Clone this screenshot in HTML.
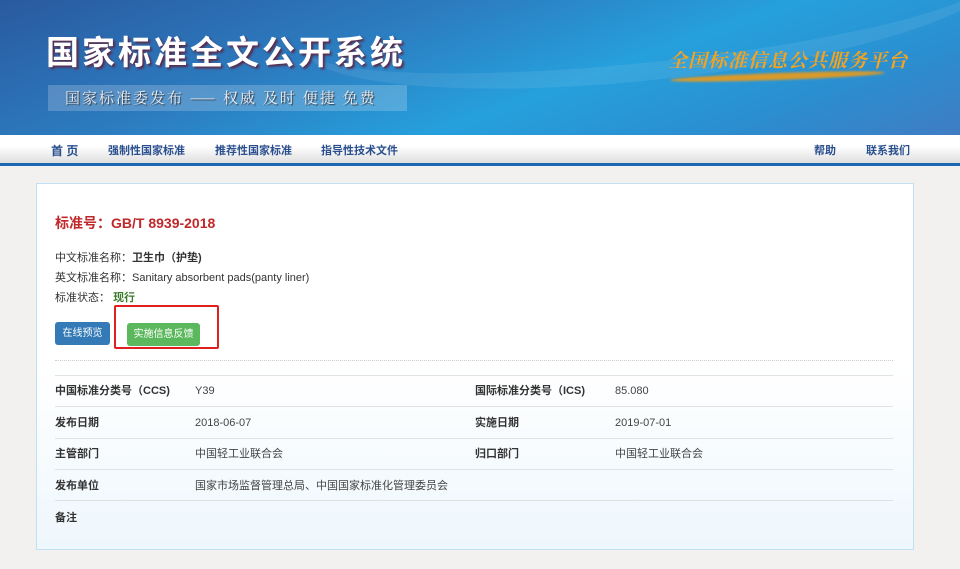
<!DOCTYPE html>
<html><head><meta charset="utf-8"><style>
*{margin:0;padding:0;box-sizing:border-box}
body{width:960px;height:569px;overflow:hidden;background:#f2f1ef;font-family:"Liberation Sans","Noto Sans CJK SC",sans-serif;position:relative}
.hdr{position:absolute;left:0;top:0;width:960px;height:135px;background:linear-gradient(160deg,#2a5a9f 0%,#2c7cc0 35%,#26a0dc 60%,#2a8fd0 80%,#3f7cc4 100%);overflow:hidden}
.swoosh{position:absolute;left:300px;top:-60px;width:700px;height:140px;border-radius:50%;border-bottom:18px solid rgba(255,255,255,.08);transform:rotate(-6deg)}
.t1{position:absolute;left:46px;top:30px;font-size:33px;font-weight:bold;color:#fff;letter-spacing:3px;text-shadow:2px 2px 2px #5a2a4a;font-family:"Noto Sans CJK SC",sans-serif;line-height:40px}
.t2{position:absolute;left:48px;top:85px;width:359px;height:26px;background:rgba(255,255,255,.2);color:#e8eef8;font-size:15px;line-height:26px;padding-left:17px;letter-spacing:2px;font-family:"Noto Serif CJK SC",serif;text-shadow:1px 1px 1px #333}
.t3{position:absolute;left:668px;top:46px;color:#f3a322;font-size:19px;letter-spacing:1px;font-style:italic;font-family:"Noto Serif CJK SC",serif;font-weight:bold}
.t3u{position:absolute;left:670px;top:73px;width:215px;height:7px;background:#d89a2a;border-radius:50%;transform:rotate(-2deg);filter:blur(1px)}
.nav{position:absolute;left:0;top:135px;width:960px;height:31px;background:linear-gradient(#fff 0%,#fff 40%,#dedede 100%);border-bottom:3px solid #1a67b2}
.nav span{position:absolute;top:9px;font-size:11px;font-weight:bold;color:#2a4f8e;line-height:14px}
.card{position:absolute;left:36px;top:183px;width:878px;height:367px;border:1px solid #bfe0f5;background:linear-gradient(#fff 0%,#fff 50%,#eef7fd 100%)}
.ttl{position:absolute;left:18px;top:30px;font-size:14px;font-weight:bold;color:#c0282a;line-height:18px}
.ln{position:absolute;left:18px;font-size:11px;color:#333;line-height:14px}
.ln b{font-weight:bold}
.btn{position:absolute;height:23px;font-size:10px;color:#fff;line-height:23px;text-align:center;border-radius:3px}
.red{position:absolute;left:77px;top:121px;width:105px;height:44px;border:2px solid #e02020;border-radius:2px}
.dot{position:absolute;left:18px;top:176px;width:838px;border-top:1px dotted #ccc}
.hl{position:absolute;left:18px;width:838px;border-top:1px solid #e2e2e2}
.c{position:absolute;font-size:11px;color:#444;line-height:14px}
.b{font-weight:bold;color:#333}
</style></head><body>
<div class="hdr"><div class="swoosh"></div>
<div class="t1">国家标准全文公开系统</div>
<div class="t2">国家标准委发布 —— 权威 及时 便捷 免费</div>
<div class="t3">全国标准信息公共服务平台</div><div class="t3u"></div>
</div>
<div class="nav">
<span style="left:51px;font-size:12px">首 页</span>
<span style="left:108px">强制性国家标准</span>
<span style="left:215px">推荐性国家标准</span>
<span style="left:321px">指导性技术文件</span>
<span style="left:814px">帮助</span>
<span style="left:866px">联系我们</span>
</div>
<div class="card">
<div class="ttl">标准号：GB/T 8939-2018</div>
<div class="ln" style="top:67px">中文标准名称：<b>卫生巾（护垫)</b></div>
<div class="ln" style="top:87px">英文标准名称：Sanitary absorbent pads(panty liner)</div>
<div class="ln" style="top:107px">标准状态： <b style="color:#3a7a2a">现行</b></div>
<div class="btn" style="left:18px;top:138px;width:55px;background:#337ab7">在线预览</div>
<div class="btn" style="left:90px;top:139px;width:73px;background:#5cb85c">实施信息反馈</div>
<div class="red"></div>
<div class="dot"></div>
<div class="hl" style="top:191px"></div>
<div class="hl" style="top:222px"></div>
<div class="hl" style="top:254px"></div>
<div class="hl" style="top:285px"></div>
<div class="hl" style="top:316px"></div>
<div class="c b" style="left:18px;top:200px">中国标准分类号（CCS)</div>
<div class="c" style="left:158px;top:200px">Y39</div>
<div class="c b" style="left:438px;top:200px">国际标准分类号（ICS)</div>
<div class="c" style="left:578px;top:200px">85.080</div>
<div class="c b" style="left:18px;top:232px">发布日期</div>
<div class="c" style="left:158px;top:232px">2018-06-07</div>
<div class="c b" style="left:438px;top:232px">实施日期</div>
<div class="c" style="left:578px;top:232px">2019-07-01</div>
<div class="c b" style="left:18px;top:263px">主管部门</div>
<div class="c" style="left:158px;top:263px">中国轻工业联合会</div>
<div class="c b" style="left:438px;top:263px">归口部门</div>
<div class="c" style="left:578px;top:263px">中国轻工业联合会</div>
<div class="c b" style="left:18px;top:295px">发布单位</div>
<div class="c" style="left:158px;top:295px">国家市场监督管理总局、中国国家标准化管理委员会</div>
<div class="c b" style="left:18px;top:327px">备注</div>
</div>
</body></html>
